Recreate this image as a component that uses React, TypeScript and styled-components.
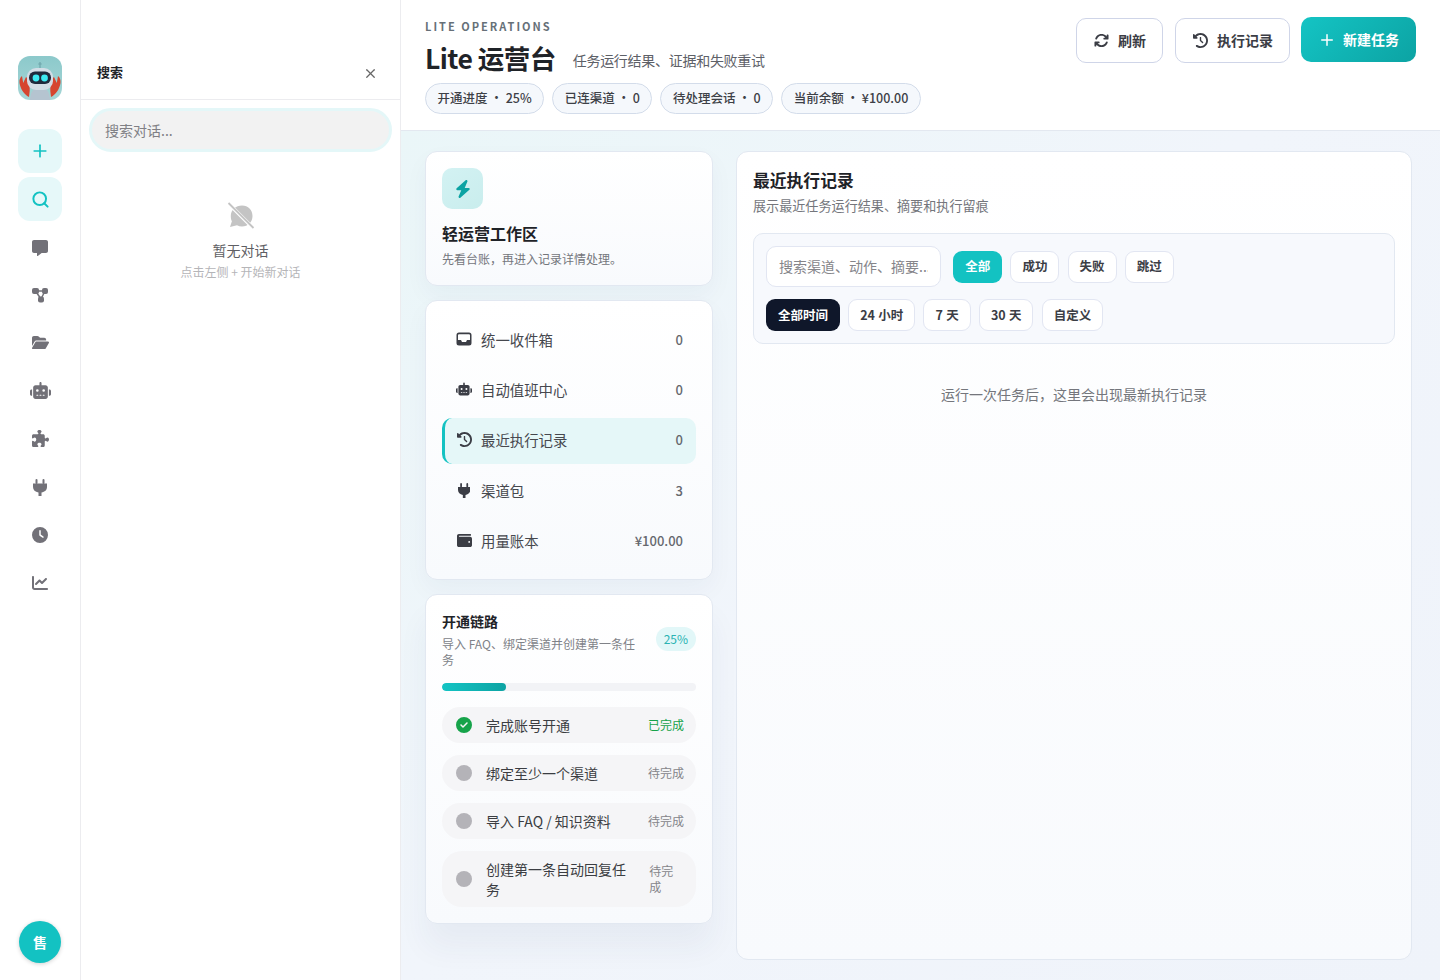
import React from 'react';
import styled, { createGlobalStyle } from 'styled-components';
import { Plus, Search, X } from 'lucide-react';
import {
  FaArrowsRotate,
  FaBolt,
  FaChartLine,
  FaCircleCheck,
  FaClock,
  FaClockRotateLeft,
  FaFolderOpen,
  FaMessage,
  FaPuzzlePiece,
  FaRobot,
  FaWallet,
} from 'react-icons/fa6';

const GlobalStyle = createGlobalStyle`
  html, body, #root {
    margin: 0;
    height: 100%;
  }

  body {
    font-family: "Noto Sans CJK SC", "Noto Sans", sans-serif;
    color: #1f2328;
    background: #fff;
    overflow: hidden;
  }

  * {
    box-sizing: border-box;
  }
`;

function RobotLogo(): JSX.Element {
  return (
    <svg width="44" height="44" viewBox="0 0 44 44">
      <defs>
        <linearGradient id="logoBg" x1="0" y1="0" x2="0" y2="1">
          <stop offset="0" stopColor="#8cc9cb" />
          <stop offset="1" stopColor="#a6d6d6" />
        </linearGradient>
      </defs>
      <rect width="44" height="44" fill="url(#logoBg)" />
      <path d="M22 6v7" stroke="#6fa5ab" strokeWidth="1.2" />
      <path d="M20.300 8h3.400" stroke="#6fa5ab" strokeWidth="1.2" />
      <path d="M12 44c0-8 4-13 10-13s10 5 10 13z" fill="#b5c4d0" />
      <path d="M11 41C6 38.500 2.500 33 1.500 27c-.4-3 .6-5.500 2.500-7l1.200 7L8 21c2.500 1.500 3.500 4.500 3.700 8 .2 4 0 8-.7 12z" fill="#d6452f" />
      <path d="M33 41c5-2.500 8.500-8 9.500-14 .4-3-.6-5.500-2.500-7l-1.200 7L36 21c-2.500 1.500-3.500 4.500-3.700 8-.2 4 0 8 .7 12z" fill="#d6452f" />
      <rect x="9" y="12" width="26" height="22" rx="9" fill="#d3dde6" />
      <rect x="11" y="15.500" width="22" height="12.500" rx="6" fill="#1f2a3d" />
      <circle cx="18" cy="22" r="3.400" fill="#3deaf2" />
      <circle cx="26.500" cy="22" r="3.400" fill="#3deaf2" />
    </svg>
  );
}

function GraphIcon(): JSX.Element {
  return (
    <svg width="16" height="16" viewBox="0 0 16 16" fill="#727178">
      <path d="M3.500 4h9M3.500 4l5.500 8M13 4l-4 8" stroke="#727178" strokeWidth="1.500" fill="none" />
      <rect x="0" y="1" width="7" height="6" rx="2" />
      <rect x="10" y="1" width="6" height="6" rx="2" />
      <rect x="6" y="9.500" width="6" height="6" rx="2" />
    </svg>
  );
}

function PlugIcon({ size = 15 }: { size?: number }): JSX.Element {
  return (
    <svg width={(size * 14) / 17} height={size} viewBox="0 0 14 17" fill="currentColor">
      <rect x="2.500" y="0" width="2" height="5" rx="1" />
      <rect x="9.500" y="0" width="2" height="5" rx="1" />
      <path d="M0 4.500h14V8c0 3-2.200 5-5.500 5.500V17h-3v-3.500C2.200 13 0 11 0 8z" />
    </svg>
  );
}

function NoChatIcon(): JSX.Element {
  return (
    <svg width="28" height="28" viewBox="0 0 28 28">
      <path d="M15 3.500c6.200 0 10.500 4.600 10.500 10.500S21 24.500 15 24.500c-1.800 0-3.500-.4-5-1.200l-7 1.700 1.900-5.700C4 17.800 3.800 15.800 3.800 14 3.800 8.100 8.800 3.500 15 3.500z" fill="#c4c4c4" />
      <path d="M1.500 1.500l25 25" stroke="#fff" strokeWidth="3.600" />
      <path d="M1.500 1l25 25" stroke="#c4c4c4" strokeWidth="1.800" />
    </svg>
  );
}

function InboxIcon(): JSX.Element {
  return (
    <svg width="16" height="16" viewBox="0 0 16 16">
      <path
        fillRule="evenodd"
        d="M3 1.500h10a2.500 2.500 0 0 1 2.500 2.500v8a2.500 2.500 0 0 1-2.500 2.500H3A2.500 2.500 0 0 1 .5 12V4A2.500 2.500 0 0 1 3 1.500zM3 3.200a1 1 0 0 0-1 1V9h3l1 2h4l1-2h3V4.200a1 1 0 0 0-1-1z"
        fill="#3b3d45"
      />
    </svg>
  );
}

const railIcons = [
  { icon: <FaMessage />, lift: -2 },
  { icon: <GraphIcon />, lift: 0 },
  { icon: <FaFolderOpen size={17} />, lift: 2 },
  { icon: <FaRobot size={21} />, lift: 2 },
  { icon: <FaPuzzlePiece size={17} />, lift: 2 },
  { icon: <PlugIcon size={17} />, lift: 0 },
  { icon: <FaClock />, lift: 0 },
  { icon: <FaChartLine />, lift: 0 },
];

const navItems = [
  { icon: <InboxIcon />, label: '统一收件箱', value: '0' },
  { icon: <FaRobot size={18} />, label: '自动值班中心', value: '0' },
  { icon: <FaClockRotateLeft />, label: '最近执行记录', value: '0', active: true },
  { icon: <PlugIcon />, label: '渠道包', value: '3' },
  { icon: <FaWallet />, label: '用量账本', value: '¥100.00' },
];

const steps = [
  { label: '完成账号开通', status: '已完成', done: true },
  { label: '绑定至少一个渠道', status: '待完成' },
  { label: '导入 FAQ / 知识资料', status: '待完成' },
  { label: '创建第一条自动回复任务', status: '待完成' },
];

const pills = ['开通进度 · 25%', '已连渠道 · 0', '待处理会话 · 0', '当前余额 · ¥100.00'];

export default function App(): JSX.Element {
  return (
    <Page>
      <GlobalStyle />
      <Rail>
        <Logo>
          <RobotLogo />
        </Logo>
        <RailIcons>
          <RailButton $tinted><Plus size={20} strokeWidth={2} /></RailButton>
          <RailButton $tinted><Search size={19} strokeWidth={2.5} /></RailButton>
          {railIcons.map((item, i) => (
            <RailButton key={i} $lift={item.lift}>{item.icon}</RailButton>
          ))}
        </RailIcons>
        <Avatar>售</Avatar>
      </Rail>

      <SearchPanel>
        <PanelHeader>
          <h2>搜索</h2>
          <X size={15} color="#666" />
        </PanelHeader>
        <PanelSearch placeholder="搜索对话..." />
        <PanelEmpty>
          <NoChatIcon />
          <strong>暂无对话</strong>
          <span>点击左侧 + 开始新对话</span>
        </PanelEmpty>
      </SearchPanel>

      <Main>
        <TopBar>
          <TopText>
            <Eyebrow>LITE OPERATIONS</Eyebrow>
            <TitleRow>
              <h1>Lite 运营台</h1>
              <p>任务运行结果、证据和失败重试</p>
            </TitleRow>
            <PillRow>
              {pills.map((pill) => (
                <Pill key={pill}>{pill}</Pill>
              ))}
            </PillRow>
          </TopText>
          <Actions>
            <GhostButton><FaArrowsRotate />刷新</GhostButton>
            <GhostButton><FaClockRotateLeft />执行记录</GhostButton>
            <PrimaryButton><Plus size={18} strokeWidth={2} />新建任务</PrimaryButton>
          </Actions>
        </TopBar>

        <Content>
          <LeftColumn>
            <HeroCard>
              <BoltBox><FaBolt /></BoltBox>
              <h3>轻运营工作区</h3>
              <p>先看台账，再进入记录详情处理。</p>
            </HeroCard>

            <NavCard>
              {navItems.map((item) => (
                <NavRow key={item.label} $active={item.active}>
                  <NavIcon>{item.icon}</NavIcon>
                  <NavLabel>{item.label}</NavLabel>
                  <NavValue>{item.value}</NavValue>
                </NavRow>
              ))}
            </NavCard>

            <SetupCard>
              <SetupHead>
                <div>
                  <h3>开通链路</h3>
                  <p>导入 FAQ、绑定渠道并创建第一条任务</p>
                </div>
                <Percent>25%</Percent>
              </SetupHead>
              <Track>
                <Fill style={{ width: '25%' }} />
              </Track>
              <StepList>
                {steps.map((step) => (
                  <StepRow key={step.label}>
                    {step.done ? <DoneMark><FaCircleCheck /></DoneMark> : <TodoMark />}
                    <StepLabel>{step.label}</StepLabel>
                    <StepStatus $done={step.done}>{step.status}</StepStatus>
                  </StepRow>
                ))}
              </StepList>
            </SetupCard>
          </LeftColumn>

          <RecordsPanel>
            <h2>最近执行记录</h2>
            <p>展示最近任务运行结果、摘要和执行留痕</p>
            <FilterBox>
              <FilterRow>
                <FilterInput placeholder="搜索渠道、动作、摘要..." />
                <Chip $variant="teal">全部</Chip>
                <Chip>成功</Chip>
                <Chip>失败</Chip>
                <Chip>跳过</Chip>
              </FilterRow>
              <FilterRow>
                <Chip $variant="dark">全部时间</Chip>
                <Chip>24 小时</Chip>
                <Chip>7 天</Chip>
                <Chip>30 天</Chip>
                <Chip>自定义</Chip>
              </FilterRow>
            </FilterBox>
            <EmptyText>运行一次任务后，这里会出现最新执行记录</EmptyText>
          </RecordsPanel>
        </Content>
      </Main>
    </Page>
  );
}

const Page = styled.div`
  display: flex;
  height: 980px;
  overflow: hidden;
`;

const Rail = styled.nav`
  flex: 0 0 81px;
  display: flex;
  flex-direction: column;
  align-items: center;
  padding: 56px 0 17px 0;
  border-right: 1px solid #ececef;
  background: #fff;
`;

const Logo = styled.div`
  width: 44px;
  height: 44px;
  border-radius: 12px;
  overflow: hidden;
`;

const RailIcons = styled.div`
  display: flex;
  flex-direction: column;
  gap: 4px;
  margin-top: 29px;
`;

const RailButton = styled.button<{ $tinted?: boolean; $lift?: number }>`
  width: 44px;
  height: 44px;
  display: flex;
  align-items: center;
  justify-content: center;
  padding: ${(p) => (p.$lift && p.$lift < 0 ? -p.$lift : 0)}px 0 ${(p) => (p.$lift && p.$lift > 0 ? p.$lift : 0)}px 0;
  border: none;
  border-radius: 12px;
  font-size: 16px;
  color: ${(p) => (p.$tinted ? '#13c2c2' : '#727178')};
  background: ${(p) => (p.$tinted ? '#e6f8f9' : 'transparent')};
`;

const Avatar = styled.div`
  width: 42px;
  height: 42px;
  margin-top: auto;
  display: flex;
  align-items: center;
  justify-content: center;
  border-radius: 50%;
  font-size: 14px;
  font-weight: 700;
  color: #fff;
  background: #13c2c2;
  box-shadow: 0 1px 4px rgba(0, 0, 0, 0.18);
`;

const SearchPanel = styled.aside`
  flex: 0 0 320px;
  display: flex;
  flex-direction: column;
  border-right: 1px solid #ececef;
  background: #fff;
`;

const PanelHeader = styled.div`
  height: 100px;
  display: flex;
  align-items: flex-end;
  justify-content: space-between;
  padding: 0 22px 18px 16px;
  border-bottom: 1px solid #ececef;

  h2 {
    margin: 0;
    font-size: 13px;
    line-height: 18px;
    font-weight: 600;
    color: #1f2328;
  }
`;

const PanelSearch = styled.input`
  height: 44px;
  margin: 8px 8px 0 8px;
  padding: 0 13px;
  border: 3px solid #e4f7f8;
  border-radius: 22px;
  outline: none;
  font-family: inherit;
  font-size: 14px;
  background: #f2f2f2;

  &::placeholder {
    color: #808085;
  }
`;

const PanelEmpty = styled.div`
  display: flex;
  flex-direction: column;
  align-items: center;
  margin-top: 50px;

  strong {
    margin-top: 10px;
    font-size: 14px;
    line-height: 20px;
    font-weight: 400;
    color: #5f5f64;
  }

  span {
    margin-top: 3px;
    font-size: 12px;
    line-height: 18px;
    color: #b5b5b8;
  }
`;

const Main = styled.main`
  flex: 1;
  min-width: 0;
  display: flex;
  flex-direction: column;
`;

const TopBar = styled.header`
  height: 131px;
  flex: none;
  display: flex;
  justify-content: space-between;
  padding: 17px 24px 0 24px;
  border-bottom: 1px solid #e3e8f0;
  background: #fff;
`;

const TopText = styled.div`
  display: flex;
  flex-direction: column;
`;

const Eyebrow = styled.div`
  font-size: 11px;
  line-height: 18px;
  font-weight: 600;
  letter-spacing: 2.02px;
  color: #667078;
`;

const TitleRow = styled.div`
  display: flex;
  align-items: center;
  gap: 17px;
  margin-top: 1px;

  h1 {
    margin: 0;
    font-size: 26.500px;
    line-height: 44px;
    font-weight: 700;
    letter-spacing: -0.02em;
    color: #1f2328;
  }

  p {
    margin: 4px 0 0 0;
    font-size: 14px;
    letter-spacing: -0.02em;
    color: #5d6067;
  }
`;

const PillRow = styled.div`
  display: flex;
  gap: 8px;
  margin-top: 3px;
`;

const Pill = styled.span`
  height: 31px;
  display: flex;
  align-items: center;
  padding: 0 11.500px 2px 11.500px;
  border: 1px solid #d3dcea;
  border-radius: 16px;
  font-size: 12.500px;
  font-weight: 500;
  white-space: pre;
  color: #3d4046;
  background: #f5f8fc;
`;

const Actions = styled.div`
  display: flex;
  align-items: flex-start;
  gap: 12px;
`;

const GhostButton = styled.button`
  height: 45px;
  margin-top: 1px;
  display: flex;
  align-items: center;
  gap: 9px;
  padding: 0 16px 2px 17px;
  border: 1px solid #cfd5e8;
  border-radius: 10px;
  font-family: inherit;
  font-size: 14px;
  font-weight: 600;
  color: #3b3d45;
  background: #fff;

  svg {
    font-size: 15px;
    margin-top: 2px;
  }
`;

const PrimaryButton = styled.button`
  height: 45px;
  margin-left: -1px;
  display: flex;
  align-items: center;
  gap: 7px;
  padding: 0 17px 2px 17px;
  border: none;
  border-radius: 10px;
  font-family: inherit;
  font-size: 14px;
  font-weight: 600;
  color: #fff;
  background: linear-gradient(135deg, #14c4c4 0%, #0ca3a3 100%);

  svg {
    margin-top: 2px;
  }
`;

const Content = styled.div`
  flex: 1;
  min-height: 0;
  display: flex;
  align-items: stretch;
  gap: 23px;
  padding: 20px 28px 20px 24px;
  background: linear-gradient(135deg, #eaf6f8 0%, #f1f5fb 45%, #eff3fa 100%);
`;

const LeftColumn = styled.div`
  flex: 0 0 288px;
  display: flex;
  flex-direction: column;
  align-items: stretch;
  gap: 14px;
`;

const Card = styled.section`
  border: 1px solid #e2e8f1;
  border-radius: 12px;
  background: linear-gradient(180deg, #ffffff 0%, #f8fafd 100%);
  box-shadow: 0 10px 24px rgba(30, 50, 90, 0.04);
`;

const HeroCard = styled(Card)`
  height: 135px;
  padding: 16px;

  h3 {
    margin: 12px 0 0 0;
    font-size: 16px;
    line-height: 24px;
    font-weight: 600;
    color: #1f2328;
  }

  p {
    margin: 5px 0 0 0;
    font-size: 12px;
    line-height: 18px;
    color: #74767c;
  }
`;

const BoltBox = styled.div`
  width: 41px;
  height: 41px;
  display: flex;
  align-items: center;
  justify-content: center;
  border-radius: 10px;
  font-size: 18px;
  color: #0ca3a3;
  background: linear-gradient(145deg, #d3f2f3 0%, #c9eded 100%);
`;

const NavCard = styled(Card)`
  height: 280px;
  display: flex;
  flex-direction: column;
  gap: 5px;
  padding: 16.400px 16px 16px 16px;
`;

const NavRow = styled.div<{ $active?: boolean }>`
  height: 45.400px;
  flex: none;
  display: flex;
  align-items: center;
  gap: 9px;
  padding: 0 13px 0 ${(p) => (p.$active ? '11px' : '14px')};
  border-left: ${(p) => (p.$active ? '3px solid #13c2c2' : 'none')};
  border-radius: 10px;
  background: ${(p) => (p.$active ? '#e5f7f8' : 'transparent')};
`;

const NavIcon = styled.span`
  width: 16px;
  flex: none;
  display: flex;
  justify-content: center;
  margin-top: -2px;
  font-size: 15px;
  color: #3b3d45;
`;

const NavLabel = styled.span`
  flex: 1;
  margin-top: -2px;
  font-size: 14.400px;
  color: #46484e;
`;

const NavValue = styled.span`
  margin-top: -2px;
  font-size: 13px;
  font-weight: 500;
  color: #66686e;
`;

const SetupCard = styled(Card)`
  height: 330px;
  padding: 16px;
  box-shadow: 0 24px 30px rgba(30, 50, 90, 0.05);
`;

const SetupHead = styled.div`
  display: flex;
  align-items: center;
  justify-content: space-between;
  gap: 20px;

  h3 {
    margin: -1px 0 0 0;
    font-size: 14px;
    line-height: 22px;
    font-weight: 600;
    color: #1f2328;
  }

  p {
    margin: 4px 0 0 0;
    font-size: 12px;
    line-height: 15.500px;
    color: #808288;
  }
`;

const Percent = styled.span`
  height: 24px;
  flex: none;
  display: flex;
  align-items: center;
  margin-bottom: 1px;
  padding: 0 8px;
  border-radius: 12px;
  font-size: 12px;
  color: #2ab3b3;
  background: #e2f7f8;
`;

const Track = styled.div`
  height: 8px;
  margin-top: 16px;
  border-radius: 4px;
  overflow: hidden;
  background: #f2f3f6;
`;

const Fill = styled.div`
  height: 100%;
  border-radius: 4px;
  background: linear-gradient(90deg, #14c4c4 0%, #0ca3a3 100%);
`;

const StepList = styled.div`
  display: flex;
  flex-direction: column;
  gap: 12px;
  margin-top: 16px;
`;

const StepRow = styled.div`
  min-height: 36px;
  display: flex;
  align-items: center;
  gap: 14px;
  padding: 0 12px 0 14px;
  border-radius: 18px;
  background: #f5f5f7;

  &:last-child {
    min-height: 56px;
    border-radius: 20px;
  }
`;

const DoneMark = styled.span`
  display: flex;
  flex: none;
  font-size: 16px;
  color: #16a34a;
`;

const TodoMark = styled.span`
  width: 16px;
  height: 16px;
  flex: none;
  border-radius: 50%;
  background: #b4b3b8;
`;

const StepLabel = styled.span`
  flex: 1 1 auto;
  min-width: 0;
  font-size: 14px;
  line-height: 20px;
  color: #3b3d42;
`;

const StepStatus = styled.span<{ $done?: boolean }>`
  flex: 0 1 auto;
  font-size: 12px;
  line-height: 16px;
  color: ${(p) => (p.$done ? '#16a34a' : '#85858a')};
`;

const RecordsPanel = styled(Card)`
  flex: 1;
  min-width: 0;
  padding: 16px;
  box-shadow: none;

  h2 {
    margin: 0;
    font-size: 16.800px;
    line-height: 24px;
    font-weight: 600;
    color: #1f2328;
  }

  p {
    margin: 4px 0 0 0;
    font-size: 13.100px;
    line-height: 20px;
    color: #74767c;
  }
`;

const FilterBox = styled.div`
  display: flex;
  flex-direction: column;
  gap: 12px;
  margin-top: 17px;
  padding: 12px;
  border: 1px solid #e2e8f1;
  border-radius: 10px;
  background: #f7f9fd;
`;

const FilterRow = styled.div`
  display: flex;
  align-items: center;
  gap: 8.200px;
`;

const FilterInput = styled.input`
  width: 175px;
  height: 41px;
  margin-right: 4px;
  padding: 0 12px 2px 12px;
  border: 1px solid #e2e6f2;
  border-radius: 10px;
  outline: none;
  font-family: inherit;
  font-size: 14px;
  background: #fff;

  &::placeholder {
    color: #85858a;
  }
`;

const Chip = styled.button<{ $variant?: 'teal' | 'dark' }>`
  height: 32px;
  padding: 0 11px 2px 11px;
  border: 1px solid ${(p) => (p.$variant ? 'transparent' : '#e2e6f2')};
  border-radius: 9px;
  font-family: inherit;
  font-size: 12.500px;
  font-weight: 600;
  word-spacing: 0.5px;
  color: ${(p) => (p.$variant ? '#fff' : '#3b3d45')};
  background: ${(p) =>
    p.$variant === 'teal' ? '#13c2c2' : p.$variant === 'dark' ? '#0f172a' : '#fff'};
`;

const EmptyText = styled.div`
  margin-top: 39px;
  text-align: center;
  font-size: 14px;
  line-height: 22px;
  color: #74767c;
`;
